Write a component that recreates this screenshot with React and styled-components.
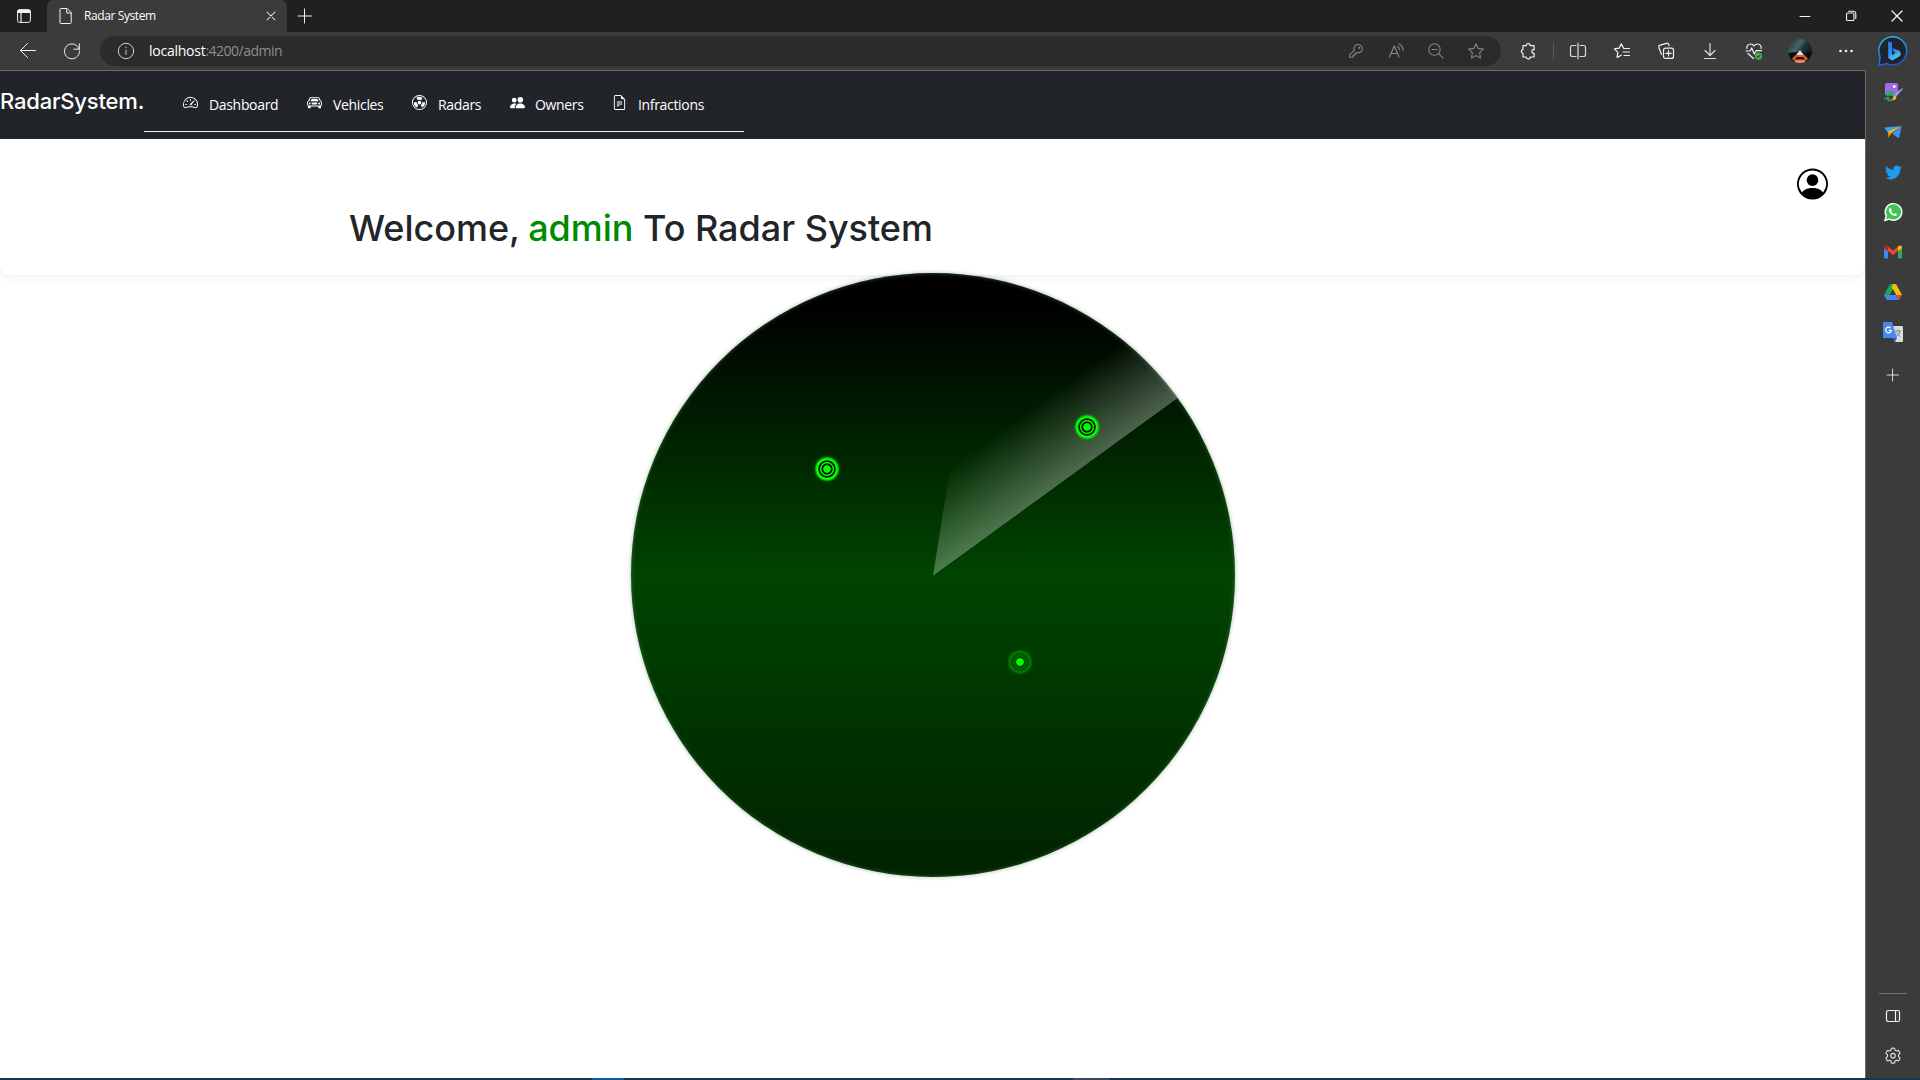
import React from "react";
import styled, { createGlobalStyle, css } from "styled-components";
import {
  BsSpeedometer2,
  BsCarFront,
  BsRadioactive,
  BsPeopleFill,
  BsFileEarmarkText,
  BsPersonCircle,
} from "react-icons/bs";

const Global = createGlobalStyle`
  * { box-sizing: border-box; }
  body { margin: 0; background: #fff; overflow: hidden; font-family: "Open Sans", "Noto Sans", sans-serif; }
`;

const Window = styled.div`
  width: 1920px;
  height: 1080px;
  display: flex;
  flex-direction: column;
`;

/* ---------- browser chrome ---------- */

const TitleBar = styled.header`
  height: 32px;
  flex: none;
  display: flex;
  background: #202020;
`;

const Slot = styled.div`
  width: ${(p) => p.$w}px;
  height: ${(p) => (p.$h ? p.$h + "px" : "100%")};
  flex: none;
  display: flex;
  align-items: center;
  justify-content: center;
`;

const Tab = styled.div`
  width: 240px;
  height: 32px;
  display: flex;
  align-items: center;
  padding: 0 8px 0 11px;
  background: #3b3b3b;
  border-radius: 6px 6px 0 0;
`;

const TabTitle = styled.span`
  flex: 1;
  margin: 0 0 0 10px;
  color: #fff;
  font-size: 12px;
  line-height: 16px;
  letter-spacing: -0.4px;
`;

const Spacer = styled.div`
  flex: 1;
`;

const Toolbar = styled.div`
  height: 38px;
  flex: none;
  display: flex;
  align-items: center;
  background: #3b3b3b;
  padding-left: 6px;
`;

const AddressBar = styled.div`
  width: 1401px;
  height: 30px;
  margin-left: 6px;
  padding: 0 5px 0 16px;
  display: flex;
  align-items: center;
  background: #2b2b2b;
  border-radius: 15px;
`;

const Url = styled.span`
  flex: 1;
  margin-left: 13px;
  color: #8d8d8d;
  font-size: 14px;
  line-height: 20px;
  letter-spacing: -0.5px;
`;

const UrlHost = styled.span`
  color: #fff;
  letter-spacing: -0.25px;
`;

const Divider = styled.div`
  width: 1px;
  height: 16px;
  background: #5c5c5c;
`;

const Svg = styled.svg`
  width: ${(p) => p.$s || 16}px;
  height: ${(p) => p.$s || 16}px;
  display: block;
  flex: none;
  overflow: visible;
  fill: none;
  stroke: ${(p) => p.$c || "#f2f2f2"};
  stroke-width: ${(p) => p.$sw || 1};
  stroke-linecap: round;
  stroke-linejoin: round;
`;

const Color = styled.svg`
  width: ${(p) => p.$s || 20}px;
  height: ${(p) => p.$s || 20}px;
  display: block;
  flex: none;
  overflow: visible;
`;

const Body = styled.div`
  flex: 1;
  min-height: 0;
  display: flex;
`;

const Sidebar = styled.aside`
  width: 54px;
  display: flex;
  flex-direction: column;
  align-items: center;
  background: #3b3b3b;
  padding: 2px 0;
`;

const SideRule = styled.div`
  width: 28px;
  height: 1px;
  margin-bottom: 2px;
  background: #707070;
`;

const Taskbar = styled.footer`
  height: 2px;
  flex: none;
  display: flex;
  background: #1c344c;
`;

const TaskMark = styled.div`
  width: ${(p) => p.$w}px;
  margin-left: ${(p) => p.$gap}px;
  background: ${(p) => p.$c};
`;

/* ---------- page ---------- */

const Page = styled.main`
  width: 1866px;
  border-top: 1px solid #6a6a6a;
  border-right: 1px solid #6a6a6a;
  background: #fff;
  display: flex;
  flex-direction: column;
`;

const Navbar = styled.nav`
  height: 68px;
  flex: none;
  display: flex;
  background: #212529;
`;

const Brand = styled.span`
  width: 144px;
  padding-top: 15px;
  color: #fff;
  font: 500 22px/30px Inter, sans-serif;
  letter-spacing: -0.18px;
  white-space: nowrap;
`;

const NavList = styled.ul`
  width: 600px;
  height: 61px;
  margin: 0;
  padding: 8px 0 0 38px;
  display: flex;
  list-style: none;
  border-bottom: 1px solid #eef0f2;
`;

const NavItem = styled.li`
  width: ${(p) => p.$w}px;
  height: 52px;
  display: flex;
  align-items: center;
  color: #fff;
  font-size: 14px;
  line-height: 20px;
  letter-spacing: -0.33px;
  white-space: nowrap;
  svg {
    width: 15px;
    height: 15px;
    flex: none;
    margin: -5px ${(p) => p.$gap || 11}px 0 1px;
  }
`;

const Hero = styled.section`
  height: 136px;
  flex: none;
  display: flex;
  justify-content: space-between;
  padding: 29px 37px 0 350px;
  background: #fff;
  border-radius: 0 0 10px 10px;
  box-shadow: 0 2px 10px rgba(0, 0, 0, 0.07);
  svg {
    width: 31px;
    height: 32px;
    color: #000;
  }
`;

const Title = styled.h1`
  margin: 38px 0 0 -1px;
  color: #212529;
  font: 500 36px/44px Inter, sans-serif;
  letter-spacing: -0.02px;
  white-space: nowrap;
`;

const Accent = styled.span`
  margin-left: -1px;
  color: #008a00;
`;

const Radar = styled.div`
  position: relative;
  width: 604px;
  height: 604px;
  flex: none;
  margin: -2px 0 0 631px;
  border-radius: 50%;
  background: linear-gradient(#000 5%, #040 50%, #020 100%);
  box-shadow: 0 0 4px rgba(0, 68, 0, 0.35), inset 0 0 4px rgba(70, 120, 70, 0.7);
  overflow: hidden;
`;

const Sweep = styled.div`
  position: absolute;
  left: 302px;
  bottom: 301.5px;
  width: 310px;
  height: 78px;
  transform-origin: 0 100%;
  transform: rotate(-36deg);
  clip-path: polygon(0 100%, 78px 0, 100% 0, 100% 100%);
  background: linear-gradient(to top, rgba(255, 255, 255, 0.3), rgba(255, 255, 255, 0));
`;

/* concentric echo rings, drawn from the dot outwards */
const Blip = styled.i`
  position: absolute;
  left: ${(p) => p.$x}px;
  top: ${(p) => p.$y}px;
  width: 26px;
  height: 26px;
  border-radius: 50%;
  ${(p) =>
    p.$faint
      ? css`
          background: radial-gradient(
            circle closest-side,
            #0f0 3.400px, #004c00 4.200px, #004c00 5.200px, #006a00 6px, #006a00 6.700px,
            #005000 7.500px, #005000 8.200px, #007400 9.300px, #007a00 10.300px, rgba(0, 122, 0, 0) 13px
          );
        `
      : css`
          background: radial-gradient(
            circle closest-side,
            #0f0 3.400px, #001400 4.200px, #001400 5.200px, #0e0 5.900px, #0e0 6.700px,
            #001400 7.400px, #001400 8.300px, #0f0 9px, #0f0 10.400px, rgba(0, 255, 0, 0) 13px
          );
          box-shadow: 0 0 2px rgba(0, 255, 0, 0.2);
        `}
`;

/* ---------- icons ---------- */

const Workspace = () => (
  <Svg $s={14} viewBox="0 0 14 14">
    <rect x=".6" y=".6" width="12.8" height="12.8" rx="2" />
    <path d="M1 2.5h12M4 4v9" strokeWidth="1.2" />
    <path d="M1 1.5h12v2H1z" fill="#f2f2f2" />
  </Svg>
);
const FileIcon = () => (
  <Svg $s={16} viewBox="0 0 16 16">
    <path d="M3.5.5h5.7l4 4v10.2a.8.8 0 0 1-.8.8H3a1 1 0 0 1-1-1V1.500a1 1 0 0 1 1-1zM8.700.8V5h4.300" />
  </Svg>
);
const Cross = ({ s = 8 }) => (
  <Svg $s={s} viewBox="0 0 10 10" $sw={1.3}>
    <path d="M0 0l10 10M10 0L0 10" />
  </Svg>
);
const Plus = ({ s = 14 }) => (
  <Svg $s={s} viewBox="0 0 14 14">
    <path d="M6.500 0v14M0 7h13.500" />
  </Svg>
);
const Back = () => (
  <Svg viewBox="0 0 16 16">
    <path d="M.5 7.500h15M7.500.5l-7 7 7 7" />
  </Svg>
);
const Refresh = () => (
  <Svg viewBox="0 0 16 16">
    <path d="M15.200 6.200A7.500 7.500 0 1 0 15.500 8M15.300.8v5.400H10" />
  </Svg>
);
const Info = () => (
  <Svg viewBox="0 0 16 16" $c="#d0d0d0">
    <circle cx="8" cy="8" r="7.700" />
    <path d="M8 7v4.500M8 4.300v.4" />
  </Svg>
);
const Key = () => (
  <Svg viewBox="0 0 16 16" $s={14} $c="#858585" $sw={1.2}>
    <path d="M6 7.200A4.800 4.800 0 1 1 9.300 10H7.800v1.700H6v1.700H4.300v1.800H.8v-3z" />
    <circle cx="11.700" cy="4.300" r=".7" />
  </Svg>
);
const ReadAloud = () => (
  <Svg viewBox="0 0 16 16" $c="#858585" $sw={1.200}>
    <path d="M1.500 14L6.300 3l4.800 11M3 10.500h6.600M9.500 3.500c1.300.8 2 2 2.100 3.300M11 1c2.300 1.200 4 3.400 4.200 6.200" />
  </Svg>
);
const ZoomOut = () => (
  <Svg viewBox="0 0 16 16" $c="#858585" $sw={1.100}>
    <circle cx="6.500" cy="6.500" r="5.700" />
    <path d="M4 6.500h5M10.700 10.700l4.500 4.500" />
  </Svg>
);
const starPath = "M8 .8l2.200 4.600 5.200.7-3.800 3.600.9 5.200L8 12.400l-4.500 2.500.9-5.200L.6 6.100l5.200-.7z";
const Star = () => (
  <Svg viewBox="0 0 16 16" $c="#858585" $sw={1.100}>
    <path d={starPath} />
  </Svg>
);
const Puzzle = () => (
  <Svg viewBox="0 0 16 16" $sw={1.200}>
    <path d="M4 2.700h3.200a2 2 0 0 1 4 0h3.900v4h-.8a1.900 1.900 0 0 0 0 3.700h.8v3.600h-3.900a2 2 0 0 1-4 0H4v-3.600a2.100 2.100 0 0 1 0-4.100z" />
  </Svg>
);
const Split = () => (
  <Svg viewBox="0 0 16 16" $c="#d8d8d8" $sw={1.200}>
    <path d="M6 2.500H2.500a2 2 0 0 0-2 2v7a2 2 0 0 0 2 2H6M10 2.500h3.500a2 2 0 0 1 2 2v7a2 2 0 0 1-2 2H10" />
    <path d="M8 .5v15" stroke="#a8a8a8" strokeWidth="1.800" />
  </Svg>
);
const Favorites = () => (
  <Svg viewBox="0 0 16 16" $sw={1.200}>
    <path d="M9.800 5.500L7.300.8 5.100 5.200.4 5.900l3.400 3.500-.7 5 4.200-2.200M10 5.500h5.500M9 9h6.500M10 12.500h5.500" />
  </Svg>
);
const Collections = () => (
  <Svg viewBox="0 0 16 16" $sw={1.200}>
    <rect x="5.500" y="5.200" width="10" height="10.200" rx="2" />
    <path d="M10.500 7.700v5.400M7.800 10.400h5.400M3.500 11.500L.8 4.300a1.800 1.800 0 0 1 1.200-2.200L8.500.3a1.800 1.800 0 0 1 2.200 1.200l.4 1.300" />
  </Svg>
);
const Download = () => (
  <Svg viewBox="0 0 16 16" $c="#dcdcdc" $sw={1.200}>
    <path d="M8 .5v11.500M3 7.500l5 5 5-5M2.500 15.500h11" />
  </Svg>
);
const Health = () => (
  <Svg viewBox="0 0 16 16" $sw={1.200}>
    <path d="M.8 5.500C.4 3 2.200 1 4.500 1 6 1 7.300 1.800 8 3c.7-1.200 2-2 3.500-2 2.300 0 4.100 2 3.700 4.500M0 8h4l1.700-3 2.600 6L10 7.700h5.500M2 10.500l5.500 5" />
    <circle cx="12.500" cy="13.100" r="3.600" fill="#4caf50" stroke="none" />
    <path d="M11 13.300l1 1 2-2.200" stroke="#1d4d20" />
  </Svg>
);
const Avatar = () => (
  <Color $s={24} viewBox="0 0 24 24">
    <defs>
      <clipPath id="avatarClip">
        <circle cx="12" cy="12" r="12" />
      </clipPath>
      <linearGradient id="avatarSky" x1="0" y1="0" x2="1" y2=".7">
        <stop offset="0" stopColor="#16323a" />
        <stop offset=".42" stopColor="#44666a" />
        <stop offset=".6" stopColor="#1c3338" />
        <stop offset="1" stopColor="#071216" />
      </linearGradient>
    </defs>
    <g clipPath="url(#avatarClip)">
      <path d="M0 0h24v24H0z" fill="url(#avatarSky)" />
      <path d="M0 14l9-1-3 11H0zM24 13l-8 1 2 10h6z" fill="#0a0d10" />
      <path d="M12 11l4 5.500H8z" fill="#f3ded2" />
      <path d="M7.500 16h9l3.500 4-3 2H7l-3-2z" fill="#e05c30" />
      <path d="M8.500 18h7l1.500 2.500H7z" fill="#2a1512" />
      <path d="M7 21.500h10V24H7z" fill="#ef8f63" />
    </g>
  </Color>
);
const Dots = () => (
  <Svg viewBox="0 0 16 16">
    <g fill="#f2f2f2" stroke="none">
      <circle cx="2.500" cy="8" r="1.300" />
      <circle cx="8" cy="8" r="1.300" />
      <circle cx="13.500" cy="8" r="1.300" />
    </g>
  </Svg>
);
const Bing = () => (
  <Color $s={30} viewBox="0 0 30 30">
    <defs>
      <linearGradient id="bingRing" x1="0" y1="0" x2=".3" y2="1">
        <stop offset="0" stopColor="#2fc0e8" />
        <stop offset=".5" stopColor="#2a8fe6" />
        <stop offset="1" stopColor="#2457d6" />
      </linearGradient>
      <linearGradient id="bingB" x1="0" y1="0" x2=".4" y2="1">
        <stop offset="0" stopColor="#2b7df0" />
        <stop offset=".6" stopColor="#2f8df2" />
        <stop offset="1" stopColor="#4cc9f4" />
      </linearGradient>
    </defs>
    <path
      d="M15.300.8A14 14 0 1 1 9 27.600L1.200 29.200 2 20.500A14 14 0 0 1 15.300.8z"
      fill="#1f232b"
      stroke="url(#bingRing)"
      strokeWidth="1.500"
    />
    <path
      d="M10.200 5.200l3.800 1.500v12.200l3.500-2.200-1.700-.9-1.400-3.600 6.200 2.300c2.600 1.200 2.900 4.500.6 6.100l-7 3.900-4-2.500z"
      fill="url(#bingB)"
    />
  </Color>
);
const Minimize = () => (
  <Svg $s={10} viewBox="0 0 10 10">
    <path d="M0 5.500h10" />
  </Svg>
);
const Restore = () => (
  <Svg $s={10} viewBox="0 0 10 10" $sw={1.100}>
    <rect x=".5" y="2" width="7.500" height="7.500" rx="1.300" />
    <path d="M2.500.2h5a2.300 2.300 0 0 1 2.300 2.300v5" />
  </Svg>
);

const Designer = () => (
  <Color viewBox="0 0 20 20">
    <rect x="2" y="1" width="13" height="12.500" rx="2" fill="#a468ee" />
    <circle cx="11.300" cy="4.600" r="1.400" fill="#fff" />
    <path d="M2 12l4.500-4 4 2.500 1.500 3H3.500z" fill="#2fa66a" />
    <path d="M1 17c3-2 6-2 4 0s3 1.500 5 .5" stroke="#35a36b" strokeWidth="1.500" fill="none" />
    <path d="M20 6.700L13.500 14.300l-2-1.800 7.300-6.200z" fill="#9a9cf6" />
    <path d="M11.300 12.700l2.200 2c.2 2.600-2 4-4.500 3 1.500-1 .8-4 2.300-5z" fill="#f7b52f" />
  </Color>
);
const Send = () => (
  <Color viewBox="0 0 20 20">
    <path d="M1.200 5.500L18.500 4 5 11z" fill="#35a3f2" />
    <path d="M18.500 4L16 16.500 9 11.500z" fill="#3f93ee" />
    <path d="M18.500 4L5 9.500v6L8.500 11z" fill="#ffb61a" />
    <path d="M5 10v5.500l3-3.500z" fill="#d98408" />
  </Color>
);
const Twitter = () => (
  <Color $s={17} viewBox="0 0 24 24">
    <path
      fill="#1d9bf0"
      d="M23.950 4.570a10 10 0 0 1-2.820.77 4.960 4.960 0 0 0 2.160-2.720c-.95.550-2 .950-3.120 1.180a4.920 4.920 0 0 0-8.380 4.480C7.690 8.090 4.070 6.130 1.640 3.160a4.820 4.820 0 0 0-.66 2.480c0 1.710.87 3.210 2.190 4.090a4.900 4.900 0 0 1-2.230-.61v.06a4.920 4.920 0 0 0 3.950 4.830 5 5 0 0 1-2.210.08 4.940 4.940 0 0 0 4.600 3.420A9.870 9.870 0 0 1 0 19.540a13.940 13.940 0 0 0 7.550 2.210c9.050 0 14-7.500 14-13.990 0-.21 0-.42-.02-.63a9.940 9.940 0 0 0 2.460-2.550z"
    />
  </Color>
);
const WhatsApp = () => (
  <Color $s={18} viewBox="0 0 20 20">
    <path d="M1 19.300l1.500-5A9.200 9.200 0 1 1 6 17.900z" fill="#3fc351" stroke="#fff" strokeWidth="1.600" />
    <path
      d="M7 5.500c-1.300.2-1.800 1.600-1.400 3 .8 2.900 3 5 5.900 5.800 1.500.3 2.800-.5 2.900-1.900l-2-1.200-1.200 1.200a7 7 0 0 1-3.300-3.300l1-1z"
      fill="#fff"
    />
  </Color>
);
const Gmail = () => (
  <Color $s={18} viewBox="0 0 18 18">
    <path d="M0 5l4 3v7.500H1.200A1.200 1.200 0 0 1 0 14.300z" fill="#4285f4" />
    <path d="M18 5l-4 3v7.500h2.800a1.200 1.200 0 0 0 1.200-1.200z" fill="#34a853" />
    <path d="M4 3.500l5 3.900 5-3.900V8l-5 3.900L4 8z" fill="#ea4335" />
    <path d="M0 4.500c0-2 2.200-2.800 4-1V8L0 5.200z" fill="#c5221f" />
    <path d="M18 4.500c0-2-2.200-2.800-4-1V8l4-2.800z" fill="#fbbc04" />
  </Color>
);
const Drive = () => (
  <Color $s={18} viewBox="0 0 18 18">
    <path d="M6 1h6L9 6.500 3 17l-3-5z" fill="#1fa15a" />
    <path d="M9 1h3l6 11h-6L9 6.500 7.500 4z" fill="#fbbc04" />
    <path d="M0 12h12l-3 5H3z" fill="#4285f4" />
    <path d="M12 12h6l-3 5z" fill="#ea4335" />
    <path d="M3 17l3-5h6l3 5z" fill="#4285f4" />
    <path d="M9 6.500L12 12H6z" fill="#3b3b3b" />
  </Color>
);
const Translate = () => (
  <Color viewBox="0 0 20 20">
    <path d="M8 4h11a1 1 0 0 1 1 1v14a1 1 0 0 1-1 1h-7z" fill="#dcdcdc" />
    <path d="M12 9h6M15 7.500V9M17 9c-.6 3-2.200 4.500-4 5.500M13.500 10.500c1 2 2.500 3.200 4 4" stroke="#6f8790" fill="none" />
    <path d="M1 0h8l5 16H1a1 1 0 0 1-1-1V1a1 1 0 0 1 1-1z" fill="#4a87ee" />
    <path d="M9 16h5l-2 4z" fill="#3160c4" />
    <path d="M7.500 6A2.800 2.800 0 1 0 8.300 8.300H5.800" stroke="#fff" strokeWidth="1.300" fill="none" />
  </Color>
);
const Panel = () => (
  <Svg $s={14} viewBox="0 0 14 14" $sw={1.200}>
    <rect x=".5" y="1.500" width="13" height="11" rx="1.800" />
    <path d="M9.500 1.500v11" />
  </Svg>
);
const Gear = () => (
  <Svg $s={18} viewBox="0 0 24 24" $sw={1.500} $c="#dcdcdc">
    <path d="M12 1.500c.8 0 1.500.1 2.200.2l.5 2.600 1.900 1.100 2.600-.9a10 10 0 0 1 2.200 3.800l-2 1.800v2.800l2 1.800a10 10 0 0 1-2.200 3.800l-2.600-.9-1.900 1.100-.5 2.600a10 10 0 0 1-4.400 0l-.5-2.600-1.900-1.100-2.600.9a10 10 0 0 1-2.200-3.800l2-1.800v-2.800l-2-1.800a10 10 0 0 1 2.200-3.800l2.600.9 1.900-1.100.5-2.600c.7-.1 1.400-.2 2.200-.2z" />
    <circle cx="12" cy="11.500" r="3" />
  </Svg>
);

const navItems = [
  { label: "Dashboard", Icon: BsSpeedometer2, w: 124 },
  { label: "Vehicles", Icon: BsCarFront, w: 105 },
  { label: "Radars", Icon: BsRadioactive, w: 98 },
  { label: "Owners", Icon: BsPeopleFill, w: 102, gap: 10 },
  { label: "Infractions", Icon: BsFileEarmarkText, w: 100 },
];

const sideApps = [Designer, Send, Twitter, WhatsApp, Gmail, Drive, Translate];
const addressTools = [Key, ReadAloud, ZoomOut, Star];
const toolbarTools = [Split, Favorites, Collections, Download, Health];

export default function App() {
  return (
    <Window>
      <Global />
      <TitleBar>
        <Slot $w={47}>
          <Workspace />
        </Slot>
        <Tab>
          <FileIcon />
          <TabTitle>Radar System</TabTitle>
          <Slot $w={16}>
            <Cross />
          </Slot>
        </Tab>
        <Slot $w={35}>
          <Plus />
        </Slot>
        <Spacer />
        <Slot $w={46}>
          <Minimize />
        </Slot>
        <Slot $w={46}>
          <Restore />
        </Slot>
        <Slot $w={46}>
          <Cross s={10} />
        </Slot>
      </TitleBar>
      <Toolbar>
        <Slot $w={44}>
          <Back />
        </Slot>
        <Slot $w={44}>
          <Refresh />
        </Slot>
        <AddressBar>
          <Slot $w={20}>
            <Info />
          </Slot>
          <Url>
            <UrlHost>localhost</UrlHost>:4200/admin
          </Url>
          {addressTools.map((Tool, i) => (
            <Slot $w={40} key={i}>
              <Tool />
            </Slot>
          ))}
        </AddressBar>
        <Slot $w={52}>
          <Puzzle />
        </Slot>
        <Divider />
        <Slot $w={2} />
        {toolbarTools.map((Tool, i) => (
          <Slot $w={44} key={i}>
            <Tool />
          </Slot>
        ))}
        <Slot $w={47}>
          <Avatar />
        </Slot>
        <Slot $w={46}>
          <Dots />
        </Slot>
        <Slot $w={48}>
          <Bing />
        </Slot>
      </Toolbar>
      <Body>
        <Page>
          <Navbar>
            <Brand>RadarSystem.</Brand>
            <NavList>
              {navItems.map(({ label, Icon, w, gap }) => (
                <NavItem key={label} $w={w} $gap={gap}>
                  <Icon />
                  {label}
                </NavItem>
              ))}
            </NavList>
          </Navbar>
          <Hero>
            <Title>
              Welcome, <Accent>admin</Accent> To Radar System
            </Title>
            <BsPersonCircle />
          </Hero>
          <Radar>
            <Sweep />
            <Blip $x={183.4} $y={183.4} />
            <Blip $x={443.4} $y={141.4} />
            <Blip $x={376.4} $y={376.4} $faint />
          </Radar>
        </Page>
        <Sidebar>
          {sideApps.map((AppIcon, i) => (
            <Slot $w={40} $h={40} key={i}>
              <AppIcon />
            </Slot>
          ))}
          <Slot $w={40} $h={46}>
            <Plus s={12} />
          </Slot>
          <Spacer />
          <SideRule />
          <Slot $w={40} $h={40}>
            <Panel />
          </Slot>
          <Slot $w={40} $h={40}>
            <Gear />
          </Slot>
        </Sidebar>
      </Body>
      <Taskbar>
        <TaskMark $gap={592} $w={32} $c="#0d5a9c" />
        <TaskMark $gap={449} $w={36} $c="#3a4a5b" />
      </Taskbar>
    </Window>
  );
}
